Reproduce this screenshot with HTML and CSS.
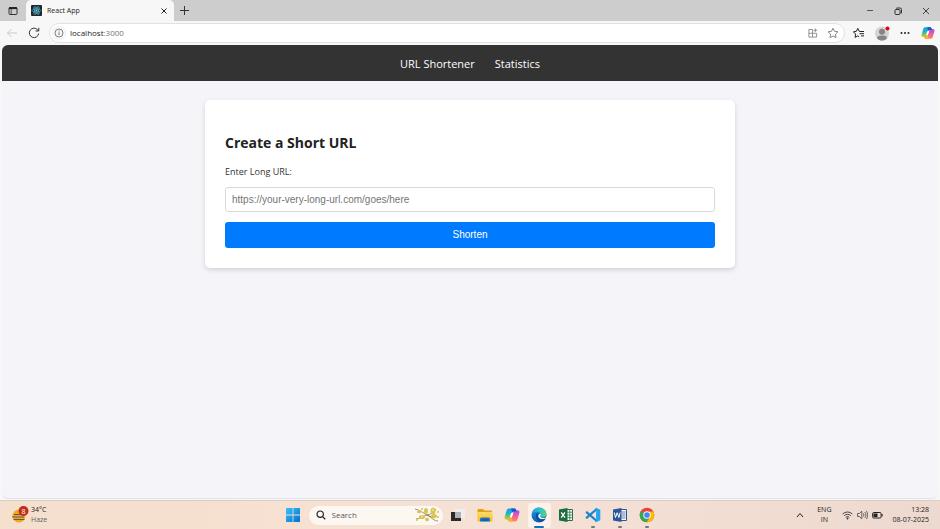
FILE: index.html
```html
<!DOCTYPE html>
<html lang="en">
<head>
<meta charset="utf-8">
<title>React App</title>
<link rel="stylesheet" href="styles.css">
</head>
<body>
<svg class="defs" aria-hidden="true">
  <defs>
    <linearGradient id="cp-a" x1="0" y1="0" x2="0" y2="1"><stop offset="0" stop-color="#1b9df0"/><stop offset=".45" stop-color="#1cb6c4"/><stop offset=".75" stop-color="#7dcb52"/><stop offset="1" stop-color="#f3c51c"/></linearGradient>
    <linearGradient id="cp-b" x1="0" y1="0" x2="0" y2="1"><stop offset="0" stop-color="#a24ee8"/><stop offset=".5" stop-color="#ef5aa0"/><stop offset="1" stop-color="#ff8a4c"/></linearGradient>
    <linearGradient id="win" x1="0" y1="0" x2="1" y2="1"><stop offset="0" stop-color="#36c3f7"/><stop offset="1" stop-color="#0670d2"/></linearGradient>
    <linearGradient id="edge-a" x1="0" y1="0" x2="1" y2="0"><stop offset="0" stop-color="#249fe0"/><stop offset=".55" stop-color="#2bc0cf"/><stop offset="1" stop-color="#62d65c"/></linearGradient>
    <linearGradient id="edge-b" x1="0" y1="0" x2="0" y2="1"><stop offset="0" stop-color="#1f98dc"/><stop offset="1" stop-color="#0d5fb4"/></linearGradient>
    <linearGradient id="folder" x1="0" y1="0" x2="0" y2="1"><stop offset="0" stop-color="#ffdd68"/><stop offset="1" stop-color="#fbb91b"/></linearGradient>
  </defs>
  <symbol id="copilot" viewBox="0 0 16 16">
    <path fill="url(#cp-a)" d="M5 1.500h5.200c1 0 1.500.5 1.800 1.400l.5 1.600H10c-1.200 0-1.700.7-2.100 1.900L6.500 11c-.4 1.200-1 1.700-2.300 1.700H2.500C.8 12.700.2 11.500.7 9.800l1.900-6.300C3 2.200 3.700 1.500 5 1.500z"/>
    <path fill="url(#cp-b)" d="M11 14.500H5.800c-1 0-1.500-.5-1.800-1.400l-.5-1.600H6c1.200 0 1.700-.7 2.100-1.900L9.500 5c.4-1.200 1-1.700 2.300-1.700h1.700c1.700 0 2.300 1.200 1.800 2.900l-1.900 6.300c-.4 1.300-1.100 2-2.400 2z"/>
    <path fill="#1556c8" d="M7 1.500h3.200c1 0 1.500.5 1.800 1.400l.5 1.600H10c-.8 0-1.300.3-1.700 1z"/>
    <path fill="#ffad32" d="M9 14.500H5.800c-1 0-1.500-.5-1.800-1.400l-.5-1.600H6c.8 0 1.300-.3 1.700-1z"/>
    <path fill="#fff" d="M7.100 6h2.100l-1.300 4.200H5.800z"/>
  </symbol>
</svg>

<div class="desktop">
  <div class="browser">
    <header class="tabbar">
      <button class="icon-btn workspace" aria-label="Tab actions">
        <svg width="10" height="10" viewBox="0 0 10 10"><rect x="1" y="1.500" width="8" height="7" rx="1" fill="none" stroke="#333"/><path d="M1 2.200h8" stroke="#222" stroke-width="1.800"/><path d="M3.200 3v5.500" stroke="#333" stroke-width=".8"/></svg>
      </button>
      <div class="tab">
        <svg width="11" height="11" viewBox="0 0 11 11"><rect width="11" height="11" rx="1" fill="#20262c"/><g fill="none" stroke="#50b9d5" stroke-width=".7"><ellipse cx="5.500" cy="5.500" rx="4.400" ry="1.700"/><ellipse cx="5.500" cy="5.500" rx="4.400" ry="1.700" transform="rotate(60 5.500 5.500)"/><ellipse cx="5.500" cy="5.500" rx="4.400" ry="1.700" transform="rotate(120 5.500 5.500)"/></g><circle cx="5.500" cy="5.500" r=".9" fill="#61dafb"/></svg>
        <span class="tab-title">React App</span>
        <button class="icon-btn" aria-label="Close tab"><svg width="6" height="6" viewBox="0 0 6 6"><path d="M.5.5l5 5M5.500.5l-5 5" stroke="#222"/></svg></button>
      </div>
      <button class="icon-btn new-tab" aria-label="New tab"><svg width="9" height="9" viewBox="0 0 9 9"><path d="M4.500 0v9M0 4.500h9" stroke="#333"/></svg></button>
      <div class="window-controls">
        <button class="icon-btn" aria-label="Minimize"><svg width="8" height="8" viewBox="0 0 8 8"><path d="M1 3.500h6" stroke="#555"/></svg></button>
        <button class="icon-btn" aria-label="Restore"><svg width="8" height="8" viewBox="0 0 8 8"><path d="M2.500 1.500V1h3.500a1.500 1.500 0 0 1 1.500 1.500V6H6.500" fill="none" stroke="#333"/><rect x="1" y="2.500" width="5" height="5" rx="1" fill="none" stroke="#333"/></svg></button>
        <button class="icon-btn" aria-label="Close"><svg width="8" height="8" viewBox="0 0 8 8"><path d="M1 1l6 6M7 1L1 7" stroke="#333" stroke-width=".9"/></svg></button>
      </div>
    </header>

    <div class="toolbar">
      <button class="icon-btn tool" aria-label="Back"><svg width="12" height="10" viewBox="0 0 12 10"><path d="M11 5H1.500M5.500 1l-4 4 4 4" fill="none" stroke="#c9c9c9"/></svg></button>
      <button class="icon-btn tool" aria-label="Refresh"><svg width="12" height="12" viewBox="0 0 12 12"><path d="M10.700 6.500A4.700 4.700 0 1 1 9.500 2.700L10.800 4M10.800.8V4H7.600" fill="none" stroke="#333"/></svg></button>
      <div class="address">
        <svg class="site-info" width="16" height="16" viewBox="0 0 16 16"><circle cx="8" cy="8" r="7.500" fill="#f5f5f5"/><circle cx="8" cy="8" r="4" fill="none" stroke="#777" stroke-width=".9"/><path d="M8 7.300v2.800M8 5.600v.9" stroke="#777"/></svg>
        <span class="url">localhost<span class="port">:3000</span></span>
        <button class="icon-btn" aria-label="Apps"><svg width="10" height="10" viewBox="0 0 10 10"><path d="M.9 1.500h3.600v7.600H.9zM.9 5.300h7.700v3.800H4.500M7.300.5v3.600M5.500 2.300h3.600" fill="none" stroke="#888" stroke-width=".9"/></svg></button>
        <button class="icon-btn" aria-label="Add favorite"><svg width="12" height="12" viewBox="0 0 12 12"><path d="M6 1.200l1.500 3.100 3.400.5-2.500 2.400.6 3.400-3-1.600-3 1.600.6-3.400L1.100 4.800l3.400-.5z" fill="none" stroke="#777" stroke-width=".9" stroke-linejoin="round"/></svg></button>
      </div>
      <div class="actions">
        <button class="icon-btn" aria-label="Favorites"><svg width="12" height="12" viewBox="0 0 12 12"><path d="M7 4.300H6.200L4.800 1.400 3.400 4.300l-3 .5 2.200 2.300-.5 3.300 2.700-1.500 1.400.8" fill="none" stroke="#222" stroke-linejoin="round"/><path d="M7 4.500h4M6.500 6.700H11M8 8.900h3" stroke="#222"/></svg></button>
        <button class="icon-btn" aria-label="Profile"><svg width="16" height="16" viewBox="0 0 16 16"><circle cx="8" cy="8.500" r="7" fill="#d6d3d0"/><circle cx="8" cy="6.700" r="3" fill="#858585"/><path d="M3 13.200c0-2 2-2.700 5-2.700s5 .7 5 2.700c-1.200 1.500-3 2.300-5 2.300s-3.800-.8-5-2.300z" fill="#858585"/><circle cx="13.500" cy="3.500" r="2" fill="#e3000f"/></svg></button>
        <button class="icon-btn" aria-label="More"><svg width="10" height="4" viewBox="0 0 10 4"><g fill="#222"><circle cx="1.500" cy="2" r="1"/><circle cx="5" cy="2" r="1"/><circle cx="8.500" cy="2" r="1"/></g></svg></button>
        <button class="icon-btn" aria-label="Copilot"><svg width="14" height="14"><use href="#copilot"/></svg></button>
      </div>
    </div>

    <div class="page">
      <nav class="site-nav">
        <a href="#shorten">URL Shortener</a>
        <a href="#statistics">Statistics</a>
      </nav>
      <main class="content">
        <form class="card" id="shorten">
          <h1>Create a Short URL</h1>
          <label for="long-url">Enter Long URL:</label>
          <input id="long-url" type="url" placeholder="https://your-very-long-url.com/goes/here">
          <button class="submit" type="submit">Shorten</button>
        </form>
      </main>
    </div>
  </div>

  <footer class="taskbar">
    <div class="weather">
      <svg width="18" height="18" viewBox="0 0 18 18"><circle cx="8" cy="10" r="6.500" fill="#f4a71c"/><path d="M3 8.500h9M1 11h12M2.500 13.500h11" stroke="#5d5b58" stroke-width="1.100"/><circle cx="12.500" cy="5" r="5" fill="#c42b1c"/><text class="badge-text" x="12.500" y="7.500" text-anchor="middle">8</text></svg>
      <div><div>34°C</div><div class="muted">Haze</div></div>
    </div>

    <div class="apps">
      <button class="app" aria-label="Start"><svg width="16" height="16" viewBox="0 0 16 16"><path fill="url(#win)" d="M1 1h6.600v6.600H1zM8.400 1H15v6.600H8.400zM1 8.400h6.600V15H1zM8.400 8.400H15V15H8.400z"/></svg></button>
      <label class="search">
        <svg width="10" height="10" viewBox="0 0 10 10"><circle cx="4.200" cy="4.200" r="3.200" fill="none" stroke="#222" stroke-width="1.200"/><path d="M6.600 6.600L9.300 9.300" stroke="#222" stroke-width="1.300"/></svg>
        <input type="search" placeholder="Search" aria-label="Search">
        <svg width="26" height="16" viewBox="0 0 26 16"><path d="M1 2c5 1 8 4 12 6s7 6 11 6M2 12c4 0 7-3 11-4s7-2 9-6M13 8l7 3" fill="none" stroke="#857a50" stroke-width=".8"/><g fill="#d8c450"><ellipse cx="12" cy="4" rx="2" ry="3"/><ellipse cx="19" cy="4" rx="2.500" ry="3.500"/><ellipse cx="8" cy="10" rx="3" ry="2"/><ellipse cx="20" cy="9" rx="3" ry="2"/><ellipse cx="13" cy="12.500" rx="2" ry="1.700"/><ellipse cx="5" cy="5" rx="2" ry="1.300"/><circle cx="24" cy="5" r="1"/><circle cx="3" cy="13" r="1"/><circle cx="24" cy="10" r="1"/><circle cx="8" cy="2" r="1"/></g><g fill="#efe39a"><circle cx="19" cy="3" r="1"/><circle cx="8" cy="9.500" r="1"/></g></svg>
      </label>
      <div class="pinned">
        <button class="app" aria-label="Task view"><svg width="16" height="16" viewBox="0 0 16 16"><path fill="#eee" d="M5 2h10v9H5z"/><path fill="#292929" d="M1 5h10v9H1z"/><path fill="#b3b3b3" d="M5 5h6v6H5z"/></svg></button>
        <button class="app" aria-label="File Explorer"><svg width="16" height="16" viewBox="0 0 16 16"><path fill="#e2a014" d="M.5 3a1 1 0 0 1 1-1H6l1.500 1.500H14a1 1 0 0 1 1 1V8H.5z"/><path fill="url(#folder)" d="M.5 5h14a1 1 0 0 1 1 1v7.500a1 1 0 0 1-1 1h-13a1 1 0 0 1-1-1z"/><path fill="#1676c8" d="M3 14.500v-2.500a1.500 1.500 0 0 1 1.500-1.500h7A1.500 1.500 0 0 1 13 12v2.500z"/><path d="M5 13h6" stroke="#0b4f94"/></svg></button>
        <button class="app" aria-label="Copilot"><svg width="16" height="16"><use href="#copilot"/></svg></button>
        <button class="app active" aria-label="Edge"><svg width="16" height="16" viewBox="0 0 16 16"><circle cx="8" cy="8" r="7.500" fill="url(#edge-b)"/><path fill="url(#edge-a)" d="M.6 7C1.200 3.200 4.300.5 8 .5c4.500 0 7.500 3.200 7.500 6.300 0 2.400-1.900 3.800-4 3.800-1.800 0-2.500-.7-2.500-1.200 0-.6.700-.8.700-1.900 0-1.500-1.500-2.800-3.800-2.800C3.400 4.700 1.500 5.600.6 7z"/><path fill="#0b4f9d" d="M5.500 6.500c-1.800 3.300.4 7.700 4.500 8.500 2-.4 3.600-1.600 4.600-3.200-3.600 1.600-7.300.2-7.300-3 0-.8.3-1.400.8-1.900-.7-.7-1.800-.9-2.600-.4z"/><path fill="#fffaf6" d="M9 9.400c0-.6.700-.8.700-1.900 0-.4-.1-.8-.3-1.100-1.300.4-2.100 1.300-2.100 2.600 0 2.300 2.400 3.400 4.900 3 1.100-.2 2-.6 2.700-1.100.4-.4.200-.7-.2-.5-2.800 1.100-5.700.2-5.700-1z"/></svg></button>
        <button class="app" aria-label="Excel"><svg width="16" height="16" viewBox="0 0 16 16"><path fill="#fff" stroke="#217346" d="M8 2.500h6.500v11H8z"/><path d="M9 5.200h5M9 8h5M9 10.700h5M11.800 3v10" stroke="#217346" stroke-width=".8"/><path fill="#1d6b40" d="M1 2.500L9.500 1v14L1 13.500z"/><path d="M3.200 5.300l3.800 5.400M7 5.300l-3.800 5.400" stroke="#fff" stroke-width="1.300"/></svg></button>
        <button class="app running" aria-label="Visual Studio Code"><svg width="16" height="16" viewBox="0 0 16 16"><path d="M11.200 2.500L1.800 10.700M11.200 13.500L1.800 5.300" stroke="#1684cf" stroke-width="2.200" stroke-linecap="round"/><path fill="#24a5ed" d="M11 .8l4.300 2v10.400l-4.300 2-.9-1.200 1-.5v-11L10.100 2z"/></svg></button>
        <button class="app running" aria-label="Word"><svg width="16" height="16" viewBox="0 0 16 16"><path fill="#fff" stroke="#2b579a" d="M8 2.500h6.500v11H8z"/><path d="M9.500 5h4M9.500 7h4M9.500 9h4M9.500 11h4" stroke="#2b579a" stroke-width=".8"/><path fill="#2b579a" d="M1 2.500L9.500 1v14L1 13.500z"/><path d="M2.300 5.500l1.200 5 1.700-4.800 1.700 4.800 1.200-5" fill="none" stroke="#fff"/></svg></button>
        <button class="app running" aria-label="Chrome"><svg width="16" height="16" viewBox="0 0 16 16"><circle cx="8" cy="8" r="7.300" fill="#ea4335"/><path fill="#34a853" d="M1.700 4.300A7.300 7.300 0 0 0 7.600 15.300L11 9.800 8 8z"/><path fill="#fbbc05" d="M14.300 4.400A7.300 7.300 0 0 1 7.600 15.300L11 9.800 10.500 4.400z"/><circle cx="8" cy="8" r="3.700" fill="#fff"/><circle cx="8" cy="8" r="2.800" fill="#4285f4"/></svg></button>
      </div>
    </div>

    <div class="tray">
      <button class="icon-btn" aria-label="Hidden icons"><svg width="8" height="6" viewBox="0 0 8 6"><path d="M1 5l3-3.500L7 5" fill="none" stroke="#222"/></svg></button>
      <div class="lang">ENG<br>IN</div>
      <div class="status">
        <svg width="11" height="10" viewBox="0 0 11 10"><path d="M.6 4a7 7 0 0 1 9.800 0M2.200 5.700a4.700 4.700 0 0 1 6.600 0M3.800 7.300a2.400 2.400 0 0 1 3.400 0" fill="none" stroke="#333" stroke-width=".9"/><circle cx="5.500" cy="8.500" r=".9" fill="#333"/></svg>
        <svg width="11" height="10" viewBox="0 0 11 10"><path d="M.6 3.500h1.700L4.800 1.200v7.600L2.300 6.500H.6zM6.300 3.300c.8.900.8 2.500 0 3.400M7.800 2c1.500 1.700 1.500 4.300 0 6M9.200.9c2.100 2.400 2.100 5.800 0 8.200" fill="none" stroke="#444" stroke-width=".8"/></svg>
        <svg width="11" height="10" viewBox="0 0 11 10"><rect x=".6" y="2.500" width="8.500" height="5.500" rx="1.200" fill="none" stroke="#222"/><path fill="#222" d="M1.500 3.500h4v3.500h-4zM9.600 4h1v2.500h-1z"/></svg>
      </div>
      <div class="clock">13:28<br>08-07-2025</div>
    </div>
  </footer>
</div>
</body>
</html>
```
FILE: styles.css
```css
* { box-sizing: border-box; }

body {
  margin: 0;
  font-family: "Open Sans", "Noto Sans", sans-serif;
  font-size: 8px;
  line-height: 10px;
  color: #222;
}

button, input { font: inherit; color: inherit; }
svg { display: block; flex: none; }
.defs { position: absolute; width: 0; height: 0; }

.desktop {
  display: flex;
  flex-direction: column;
  min-height: 100vh;
}

.browser {
  flex: 1;
  display: flex;
  flex-direction: column;
  background: #f7f7f7;
}

.icon-btn {
  display: flex;
  align-items: center;
  justify-content: center;
  padding: 0;
  border: 0;
  background: none;
}

/* Tab strip */
.tabbar {
  display: flex;
  height: 21px;
  background: #cdcdcd;
}

.workspace { width: 26px; }

.tab {
  display: flex;
  align-items: center;
  gap: 5px;
  width: 148px;
  padding: 0 7px 0 5px;
  border-radius: 5px 5px 0 0;
  background: #f7f7f7;
}

.tab-title { flex: 1; font-size: 7px; }
.new-tab { width: 21px; }

.window-controls { display: flex; margin-left: auto; }
.window-controls .icon-btn { width: 28px; }

/* Address row */
.toolbar {
  display: flex;
  align-items: center;
  height: 24px;
  padding: 0 1px;
}

.tool { width: 22px; }

.address {
  flex: 1;
  display: flex;
  align-items: center;
  gap: 9px;
  height: 20px;
  margin-left: 4px;
  padding: 0 5px 0 1px;
  border: 1px solid #e1e1e1;
  border-radius: 10px;
  background: #fff;
}

.url { flex: 1; margin-left: -6px; }
.port { color: #777; }

.actions { display: flex; margin-left: 2px; }
.actions .icon-btn { width: 23px; }

/* Web page */
.page {
  flex: 1;
  margin: 0 2px 1px;
  overflow: hidden;
  border: 1px solid #e4e4e8;
  border-width: 0 0 1px;
  border-radius: 6px;
  background: #f4f4f9;
}

.site-nav {
  display: flex;
  justify-content: center;
  gap: 20px;
  padding: 11px 10px 9px;
  background: #333;
  font-size: 11px;
  line-height: 16px;
}

.site-nav a { color: #fff; text-decoration: none; }

.content { padding: 19px; }

.card {
  display: flex;
  flex-direction: column;
  max-width: 530px;
  margin: 0 auto;
  padding: 33px 20px 20px;
  border-radius: 5px;
  background: #fff;
  box-shadow: 0 2px 5px rgba(0, 0, 0, 0.14);
}

.card h1 {
  margin: 0;
  font-size: 14px;
  line-height: 20px;
}

.card label {
  margin: 12px 0 8px;
  color: #333;
  font-size: 9px;
  line-height: 14px;
}

.card input {
  height: 25px;
  padding: 0 6px;
  border: 1px solid #d9d9d9;
  border-radius: 3px;
  font-family: "Liberation Sans", sans-serif;
  font-size: 10px;
}

.card input::placeholder { color: #757575; }

.submit {
  height: 26px;
  margin-top: 10px;
  border: 0;
  border-radius: 3px;
  background: #007bff;
  color: #fff;
  font-family: "Liberation Sans", sans-serif;
  font-size: 10px;
}

/* Taskbar */
.taskbar {
  display: grid;
  grid-template-columns: 1fr auto 1fr;
  align-items: center;
  height: 29px;
  padding: 0 11px;
  border-top: 1px solid #d9cdc8;
  background: linear-gradient(90deg, #f5dfcd, #f6e2d5 50%, #eed9d0);
  font-size: 7px;
}

.weather { display: flex; align-items: center; gap: 2px; }
.muted { color: #666; }
.badge-text { fill: #fff; font-size: 7px; }

.apps { display: flex; align-items: center; gap: 2px; }
.pinned { display: flex; }

.app {
  position: relative;
  display: flex;
  align-items: center;
  justify-content: center;
  width: 27px;
  height: 25px;
  padding: 0;
  border: 0;
  background: none;
}

.app.active {
  width: 23px;
  margin: 0 2px;
  border-radius: 3px;
  background: #fcf2eb;
}

.app.running::after,
.app.active::after {
  content: "";
  position: absolute;
  bottom: 0;
  width: 4px;
  height: 2px;
  border-radius: 1px;
  background: #777;
}

.app.active::after { width: 10px; background: #1470c4; }

.search {
  display: flex;
  align-items: center;
  gap: 6px;
  width: 134px;
  height: 19px;
  padding: 0 3px 0 7px;
  border-radius: 10px;
  background: #fdf7f1;
}

.search input {
  flex: 1;
  min-width: 0;
  padding: 0;
  border: 0;
  outline: 0;
  background: none;
  font-size: 8px;
}

.search input::placeholder { color: #555; }

.tray {
  display: flex;
  align-items: center;
  justify-content: flex-end;
}

.lang { margin: 0 11px 0 13px; text-align: center; }
.status { display: flex; gap: 4px; }
.clock { margin-left: 9px; text-align: right; }
```
